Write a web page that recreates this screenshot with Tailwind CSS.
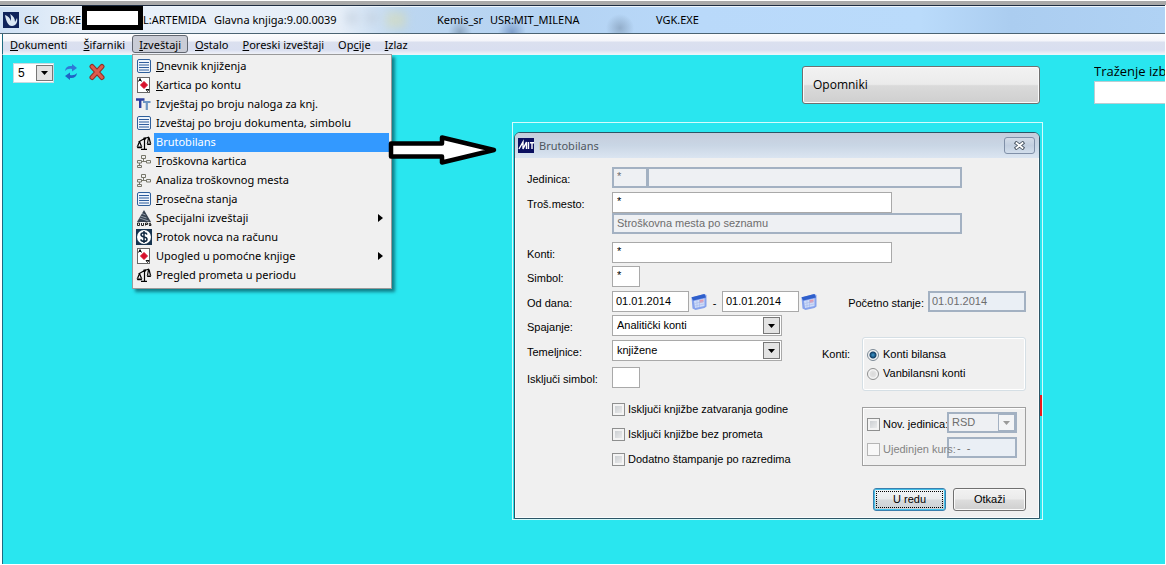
<!DOCTYPE html>
<html lang="sr-Latn">
<head>
<meta charset="utf-8">
<meta name="viewport" content="width=device-width, initial-scale=1">
<title>Glavna knjiga</title>
<script src="https://cdn.jsdelivr.net/npm/@tailwindcss/browser@4"></script>
</head>
<body class="relative flex min-h-screen flex-col overflow-hidden bg-white pr-px pb-px pl-0.5 font-['Noto_Sans','Open_Sans',sans-serif] text-[11px] leading-4 text-black">

<svg class="hidden" aria-hidden="true">
  <symbol id="i-list" viewBox="0 0 16 16">
    <rect x="1.5" y="1.5" width="13" height="13" rx="1.5" fill="#eef4fb" stroke="#2f5f9a"/>
    <path d="M3 4.500h10M3 7h10M3 9.500h10M3 12h10" stroke="#2d5c9c" stroke-width="1.200"/>
  </symbol>
  <symbol id="i-card" viewBox="0 0 16 16">
    <rect x="1.500" y=".5" width="12" height="15" fill="#fff" stroke="#666"/>
    <path d="M8 4.500l3.500 3.500L8 11.500 4.500 8z" fill="#d8112c" stroke="#d8112c"/>
    <path d="M2.500 4.500L4 1.500l1.500 3M3 3.500h2M10 12.500h3l-1.500 2z" fill="none" stroke="#111"/>
  </symbol>
  <symbol id="i-tt" viewBox="0 0 16 16">
    <path d="M0 3.500h8.500M4.200 3v9" fill="none" stroke="#2b3f9e" stroke-width="2.400"/>
    <path d="M7 6h7.500M10.800 6v8" fill="none" stroke="#6d95c4" stroke-width="2.200"/>
  </symbol>
  <symbol id="i-scale" viewBox="0 0 16 16">
    <path d="M8.500 3v11M5 14.300h6M2.500 7L8.500 3.500 13 2M3.500 6.500L1.500 11.500M3.500 6.500l2 5M12.500 2.500l-1 6M13 2.500l1.500 6" fill="none" stroke="#000" stroke-width="1.200"/>
    <path d="M.5 11.500h6l-1 1.700h-4zM10.500 8.500h5l-1 1.500h-3zM7.500 2.500h2.500v2H7.500z" fill="#000"/>
  </symbol>
  <symbol id="i-tree" viewBox="0 0 16 16">
    <path d="M5.500 2.500h4v3h-4zM1.500 7.500h4v2.500h-4zM10.500 7.500h4v2.500h-4zM1.500 12.500h4v2h-4zM7.500 5.500v3M5.500 8.500h5M3.500 10v2.500" fill="none" stroke="#77776a"/>
  </symbol>
  <symbol id="i-durs" viewBox="0 0 16 16">
    <path d="M8 0l7 12H1z" fill="#35404e"/>
    <path d="M4.500 6l6 2M3.500 8l9 3M6 3.500l3.500 1.500" stroke="#a9b4c2" stroke-width=".8"/>
    <path d="M1.500 13v2.500h2v-2.500zM5.500 13v2.500h2V13M9.500 15.500V13h2v1.500h-2M15 13.300h-1.800v1H15v1.200h-2" fill="none" stroke="#222"/>
  </symbol>
  <symbol id="i-dollar" viewBox="0 0 16 16">
    <path d="M0 0h16v16H0z" fill="#173450"/><circle cx="8" cy="8" r="7" fill="#fff"/>
    <path d="M11 5.500C10.500 4 9.500 3.800 8 3.800c-2 0-3 .8-3 2S6.500 7.700 8 8s3 .8 3 2.200-1.200 2.100-3 2.100-3-.8-3.200-2M8 2v12" fill="none" stroke="#0f2740" stroke-width="1.500"/>
  </symbol>
  <symbol id="i-cal" viewBox="0 0 16 16">
    <path d="M.5 3.500L13 0l2.500 1v11.500l-2 1.500-9 2-3-1.500z" fill="#86a2ec"/>
    <path d="M.5 3.200L13.500 0l1.500 3.500L2 6.500z" fill="#2f5fcb"/>
    <path d="M3 7l10.500-2.500v7.500L4 14z" fill="#cfdcf8"/>
    <path d="M8.500 6.200l4-.9v3l-4 .8z" fill="#e59aac"/>
    <path d="M3.500 9.500l9-2M4 12l9-2M6 6.500v7M8.500 6v7" stroke="#a3b9ec" stroke-width=".6"/>
  </symbol>
</svg>

<!-- Window caption -->
<div class="-mx-0.5 mt-px h-1 bg-[#a9a9a9]"></div>
<header class="-ml-0.5 flex h-[29px] items-center border-y border-t-[#1c2b40] border-b-[#4b6373] bg-[radial-gradient(circle_at_460px_26px,#8fa9c4_0,transparent_12px),radial-gradient(circle_at_512px_26px,#7f9fcb_0,transparent_14px),radial-gradient(circle_at_620px_22px,#93aecb_0,transparent_14px),linear-gradient(90deg,#cfe1f5_0,#e9f1fa_80px,#e6eef8_340px,#bcd6f0_400px,#b4d3f3_560px,#b9d9fa_700px,#badbfb_920px,#abcdf0_1010px,#b0d2f4_100%)] pl-[3px] text-[11px] whitespace-nowrap shadow-[inset_0_1px_#eef6fd]">
  <svg class="h-4 w-4 shrink-0" viewBox="0 0 16 16"><path d="M0 0h16v16H0z" fill="#10245c"/><path d="M2 3c3 1 5 3 6 6 0-3 0-5-1-7 3 2 5 4 5 8l2-4c1 4-1 8-5 8C5 14 3 9 2 3z" fill="#dbe8f5"/></svg>
  <span class="ml-[5px] w-[26px]">GK</span>
  <span class="w-8">DB:KE</span>
  <span class="-mt-1 h-6 w-[61px] shrink-0 border-[5px] border-black bg-white"></span>
  <span class="w-[71px]">L:ARTEMIDA</span>
  <span class="w-[128px]">Glavna knjiga:9.00.0039</span>
  <span class="flex w-[95px] gap-2 pl-1 opacity-60 blur-xs"><i class="h-3 w-3 bg-[#c3cfdd]"></i><i class="h-3 w-3 bg-[#c3cfdd]"></i><i class="h-4 w-5 bg-[#d7dcb8]"></i></span>
  <span class="w-[53px]">Kemis_sr</span>
  <span class="w-[166px]">USR:MIT_MILENA</span>
  <span>VGK.EXE</span>
</header>

<!-- Menu bar -->
<nav class="flex h-[21px] items-center border-b border-l border-b-[#e9f6fb] border-l-[#1d6a80] bg-[linear-gradient(#fdfdfe_0,#f4f5fa_35%,#dbe0ef_40%,#d9dff0_80%,#f0f2f8_100%)] whitespace-nowrap">
  <button class="mr-0.5 h-[18px] px-[7px] pt-px"><u>D</u>okumenti</button>
  <button class="h-[18px] px-[7px] pt-px"><u>Š</u>ifarniki</button>
  <button class="flex h-[18px] items-center rounded-[3px] border border-[#60656f] bg-[#c9ccd6] px-1.5 pt-px" aria-expanded="true"><u>I</u>zveštaji</button>
  <button class="h-[18px] px-[7px] pt-px"><u>O</u>stalo</button>
  <button class="h-[18px] px-[7px] pt-px"><u>P</u>oreski izveštaji</button>
  <button class="h-[18px] px-[7px] pt-px">Op<u>c</u>ije</button>
  <button class="h-[18px] px-[7px] pt-px"><u>I</u>zlaz</button>
</nav>

<!-- Work area -->
<main class="flex-1 border-l border-[#1d6a80] bg-[#29e6ef]">
  <div class="flex items-start pt-2 pl-2.5 font-['Liberation_Sans',Arial,sans-serif] text-[12px]">
    <div class="relative h-5 w-[41px]">
      <select aria-label="Broj" class="h-full w-full appearance-none border border-[#c9dbe0] bg-white pl-1"><option>5</option></select>
      <span class="pointer-events-none absolute top-[2px] right-[1px] flex h-4 w-[17px] items-center justify-center border border-[#777] bg-[#e3e3e3]"><svg class="h-1 w-[7px]" viewBox="0 0 7 4"><path d="M0 0h7L3.500 4z"/></svg></span>
    </div>
    <button class="ml-2.5" aria-label="Osveži"><svg class="h-[18px] w-[14px]" viewBox="0 0 14 18"><path d="M1 8c.5-4 3-5.500 7-5V1l5 4-5 3.500V6C5 5.500 3 6 1 8z" fill="#2f78d6"/><path d="M13 10c-.5 4-3 5.500-7 5v2l-5-4 5-3.500V12c3 .5 5 0 7-2z" fill="#1f62c4"/></svg></button>
    <button class="ml-[11px]" aria-label="Zatvori"><svg class="h-[18px] w-4" viewBox="0 0 16 18"><path d="M3 3.500l10 11M13 3.500l-10 11" stroke="#8d3226" stroke-width="5" stroke-linecap="round"/><path d="M3 3.500l10 11M13 3.500l-10 11" stroke="#dd5a4c" stroke-width="3" stroke-linecap="round"/></svg></button>
    <button class="mt-[3px] ml-auto h-[38px] w-[238px] rounded-[3px] border border-[#707070] bg-[linear-gradient(#f2f2f2_0,#ebebeb_48%,#dadada_52%,#cfcfcf_100%)] pl-2.5 text-left font-['Open_Sans','Noto_Sans',sans-serif] shadow-[inset_0_0_0_1px_#fafafa]">Opomniki</button>
    <div class="ml-[54px] w-[71px] overflow-hidden font-['Open_Sans','Noto_Sans',sans-serif] text-[13px] whitespace-nowrap">
      <label for="search" class="block h-[18px]">Traženje izb</label>
      <input id="search" class="h-[23px] w-40 border border-[#b9cdd2] bg-white px-1">
    </div>
  </div>
</main>

<!-- Open menu -->
<ul class="absolute top-[54px] left-[132px] w-[260px] border border-[#9a9a9a] bg-[#f0f0f0] p-0.5 pb-[3px] whitespace-nowrap shadow-[3px_3px_3px_rgba(0,60,70,.6)]">
  <li class="flex h-[19px] items-center gap-1 pb-0.5 pl-px"><svg class="h-4 w-4"><use href="#i-list"/></svg><span><u>D</u>nevnik knjiženja</span></li>
  <li class="flex h-[19px] items-center gap-1 pb-0.5 pl-px"><svg class="h-4 w-4"><use href="#i-card"/></svg><span><u>K</u>artica po kontu</span></li>
  <li class="flex h-[19px] items-center gap-1 pb-0.5 pl-px"><svg class="h-4 w-4"><use href="#i-tt"/></svg><span>Izvještaj po broju naloga za knj.</span></li>
  <li class="flex h-[19px] items-center gap-1 pb-0.5 pl-px"><svg class="h-4 w-4"><use href="#i-list"/></svg><span>Izveštaj po broju dokumenta, simbolu</span></li>
  <li class="flex h-[19px] items-center gap-0.5 pl-px"><svg class="h-4 w-4 shrink-0"><use href="#i-scale"/></svg><span class="flex h-full flex-1 items-center bg-[#3399ff] pb-0.5 pl-0.5 text-white">Brutobilans</span></li>
  <li class="flex h-[19px] items-center gap-1 pb-0.5 pl-px"><svg class="h-4 w-4"><use href="#i-tree"/></svg><span><u>T</u>roškovna kartica</span></li>
  <li class="flex h-[19px] items-center gap-1 pb-0.5 pl-px"><svg class="h-4 w-4"><use href="#i-tree"/></svg><span>Analiza troškovnog mesta</span></li>
  <li class="flex h-[19px] items-center gap-1 pb-0.5 pl-px"><svg class="h-4 w-4"><use href="#i-list"/></svg><span><u>P</u>rosečna stanja</span></li>
  <li class="flex h-[19px] items-center gap-1 pb-0.5 pl-px"><svg class="h-4 w-4"><use href="#i-durs"/></svg><span>Specijalni izveštaji</span><svg class="mr-1.5 ml-auto h-2 w-[5px]" viewBox="0 0 5 8"><path d="M0 0l5 4-5 4z"/></svg></li>
  <li class="flex h-[19px] items-center gap-1 pb-0.5 pl-px"><svg class="h-4 w-4"><use href="#i-dollar"/></svg><span>Protok novca na računu</span></li>
  <li class="flex h-[19px] items-center gap-1 pb-0.5 pl-px"><svg class="h-4 w-4"><use href="#i-card"/></svg><span>Upogled u pomoćne knjige</span><svg class="mr-1.5 ml-auto h-2 w-[5px]" viewBox="0 0 5 8"><path d="M0 0l5 4-5 4z"/></svg></li>
  <li class="flex h-[19px] items-center gap-1 pb-0.5 pl-px"><svg class="h-4 w-4"><use href="#i-scale"/></svg><span>Pregled prometa u periodu</span></li>
</ul>

<!-- Annotation arrow -->
<svg class="absolute top-[134px] left-[388px] h-8 w-[110px]" viewBox="0 0 110 32"><path d="M3 9.500h51V3.500L106 16 54 28.500v-6H3z" fill="#fff" stroke="#000" stroke-width="4.500" stroke-linejoin="round"/></svg>

<!-- Dialog window -->
<div class="absolute top-[395px] left-[1038px] h-[21px] w-1 bg-[#e8191c]"></div>
<section role="dialog" aria-label="Brutobilans" class="absolute top-[122px] left-[512px] w-[531px] border border-[#d5fbfc] pt-[9px] pr-0.5 pl-px font-['Liberation_Sans',Arial,sans-serif] text-[11px] leading-[13px]">
  <div class="rounded-t-[6px] border border-[#2c5566] bg-[#f0f0f0] shadow-[inset_0_0_0_1px_#fafcfd]">
    <div class="flex h-[25px] items-center rounded-t-[5px] bg-[linear-gradient(#c5cddc,#c9d6e5_50%,#dbe5f1)] pr-1 pl-[3px] font-['Noto_Sans','Open_Sans',sans-serif] text-[#4f565e]">
      <svg class="h-[15px] w-4" viewBox="0 0 16 15"><path d="M0 0h16v15H0z" fill="#0b1060"/><path d="M1 11l4-7v7l3.500-7v7M10.500 4v7M12 4.700h4M14 5v6" fill="none" stroke="#fff" stroke-width="1.400"/></svg>
      <span class="ml-[5px]">Brutobilans</span>
      <button aria-label="Zatvori" class="ml-auto flex h-[17px] w-[31px] items-center justify-center rounded-[3px] border border-[#8090a8] bg-[linear-gradient(#d3dce8,#c2cfe0_50%,#d2deec)]"><svg class="h-[9px] w-[11px]" viewBox="0 0 11 9"><path d="M1 1l9 7M10 1L1 8" stroke="#4c5866" stroke-width="3.600"/><path d="M1.800 1.500l7.400 6M9.200 1.500l-7.400 6" stroke="#fff" stroke-width="1.800"/></svg></button>
    </div>

    <form class="pt-[9px] pr-[13px] pb-[7px] pl-3 whitespace-nowrap">
      <div class="flex items-center">
        <label for="unit" class="w-[85px] pt-1">Jedinica:</label>
        <input id="unit" disabled value="*" class="h-[21px] w-[35px] border-2 border-r border-[#a3b1c2] bg-[#eef0f3] px-[3px] pb-1 text-[#6d6d6d]">
        <input aria-label="Naziv jedinice" disabled class="h-[21px] w-[315px] border-2 border-[#a3b1c2] bg-[#eef0f3] px-1">
      </div>
      <div class="mt-1 flex items-center">
        <label for="cost" class="w-[85px] pt-1">Troš.mesto:</label>
        <input id="cost" value="*" class="h-[21px] w-[280px] border border-[#a9a9a9] bg-white px-1 pb-1">
      </div>
      <input aria-label="Opis troškovnog mesta" disabled value="Stroškovna mesta po seznamu" class="ml-[85px] block h-[21px] w-[350px] border-2 border-[#a3b1c2] bg-[#eef0f3] px-[3px] pb-0.5 text-[#6d6d6d]">
      <div class="mt-2 flex items-center">
        <label for="acc" class="w-[85px] pt-1">Konti:</label>
        <input id="acc" value="*" class="h-[21px] w-[280px] border border-[#a9a9a9] bg-white px-1 pb-1">
      </div>
      <div class="mt-[3px] flex items-center">
        <label for="sym" class="w-[85px] pt-1">Simbol:</label>
        <input id="sym" value="*" class="h-[21px] w-7 border border-[#a9a9a9] bg-white px-1 pb-1">
      </div>
      <div class="mt-1 flex items-center">
        <label for="from" class="w-[85px] pt-1">Od dana:</label>
        <input id="from" value="01.01.2014" class="h-[21px] w-[77px] border border-[#a9a9a9] bg-white px-[3px] pb-0.5">
        <button type="button" aria-label="Izaberi datum od" class="ml-0.5"><svg class="h-4 w-4"><use href="#i-cal"/></svg></button>
        <span class="w-[15px] pt-1 text-center">-</span>
        <input aria-label="Do dana" value="01.01.2014" class="h-[21px] w-[77px] border border-[#a9a9a9] bg-white px-[3px] pb-0.5">
        <button type="button" aria-label="Izaberi datum do" class="ml-0.5"><svg class="h-4 w-4"><use href="#i-cal"/></svg></button>
        <label for="open" class="mr-1 ml-auto pt-1">Početno stanje:</label>
        <input id="open" disabled value="01.01.2014" class="h-[21px] w-[98px] border-2 border-[#a3b1c2] bg-[#eaeff5] px-0.5 pb-0.5 text-[#6d6d6d]">
      </div>

      <div class="mt-[3px] flex justify-between">
        <div>
          <div class="flex items-center">
            <label for="join" class="w-[85px] pt-1">Spajanje:</label>
            <div class="relative h-[21px] w-[170px]">
              <select id="join" class="h-full w-full appearance-none border border-[#a9a9a9] bg-white pl-1"><option>Analitički konti</option></select>
              <span class="pointer-events-none absolute top-[2px] right-[2px] flex h-[17px] w-[17px] items-center justify-center border border-[#777] bg-[#e3e3e3]"><svg class="h-1 w-[7px]" viewBox="0 0 7 4"><path d="M0 0h7L3.500 4z"/></svg></span>
            </div>
          </div>
          <div class="mt-1 flex items-center">
            <label for="vouch" class="w-[85px] pt-1">Temeljnice:</label>
            <div class="relative h-[21px] w-[170px]">
              <select id="vouch" class="h-full w-full appearance-none border border-[#a9a9a9] bg-white pl-1"><option>knjižene</option></select>
              <span class="pointer-events-none absolute top-[2px] right-[2px] flex h-[17px] w-[17px] items-center justify-center border border-[#777] bg-[#e3e3e3]"><svg class="h-1 w-[7px]" viewBox="0 0 7 4"><path d="M0 0h7L3.500 4z"/></svg></span>
            </div>
          </div>
          <div class="mt-1.5 flex items-center">
            <label for="excl" class="w-[85px] pt-1">Isključi simbol:</label>
            <input id="excl" class="h-[21px] w-7 border border-[#a9a9a9] bg-white px-1">
          </div>
          <div class="mt-[15px] ml-[85px] flex flex-col gap-3">
            <label class="flex h-[13px] items-center gap-[3px]"><input type="checkbox" class="h-[13px] w-[13px] appearance-none border border-[#8e8f8f] bg-[linear-gradient(135deg,#c4c8cc,#f2f2f2)] shadow-[inset_0_0_0_2px_#f4f4f4]">Isključi knjižbe zatvaranja godine</label>
            <label class="flex h-[13px] items-center gap-[3px]"><input type="checkbox" class="h-[13px] w-[13px] appearance-none border border-[#8e8f8f] bg-[linear-gradient(135deg,#c4c8cc,#f2f2f2)] shadow-[inset_0_0_0_2px_#f4f4f4]">Isključi knjižbe bez prometa</label>
            <label class="flex h-[13px] items-center gap-[3px]"><input type="checkbox" class="h-[13px] w-[13px] appearance-none border border-[#8e8f8f] bg-[linear-gradient(135deg,#c4c8cc,#f2f2f2)] shadow-[inset_0_0_0_2px_#f4f4f4]">Dodatno štampanje po razredima</label>
          </div>
        </div>

        <div class="pt-[22px]">
          <div class="flex">
            <span class="w-10 pt-[11px]">Konti:</span>
            <div role="radiogroup" aria-label="Konti" class="flex h-[54px] w-[164px] flex-col gap-1.5 rounded-[3px] border border-[#d5dfe5] pt-2.5 pl-1 shadow-[inset_0_0_0_1px_#fff]">
              <label class="flex h-[13px] items-center gap-1"><input type="radio" name="k" checked class="h-3 w-3 appearance-none rounded-full border border-[#7d8a96] bg-[radial-gradient(circle,#3f9bd0_0,#123f66_3px,#f4f4f4_4px)]">Konti bilansa</label>
              <label class="flex h-[13px] items-center gap-1"><input type="radio" name="k" class="h-3 w-3 appearance-none rounded-full border border-[#8e8f8f] bg-[radial-gradient(circle,#d9d9d9_0,#e2e2e2_3px,#f4f4f4_4px)]">Vanbilansni konti</label>
            </div>
          </div>
          <div class="mt-4 ml-10 flex h-[59px] w-[164px] flex-col gap-1 border border-[#a0a0a0] pt-1 pr-2 pl-1 shadow-[inset_1px_1px_#fff]">
            <div class="flex items-center">
              <input id="newunit" type="checkbox" class="mt-1 h-[13px] w-[13px] shrink-0 appearance-none border border-[#8e8f8f] bg-[linear-gradient(135deg,#c4c8cc,#f2f2f2)] shadow-[inset_0_0_0_2px_#f4f4f4]">
              <label for="newunit" class="w-[67px] pt-1 pl-[3px]">Nov. jedinica:</label>
              <div class="relative h-[21px] w-[70px] shrink-0">
                <select aria-label="Valuta" disabled class="h-full w-full appearance-none border-2 border-[#a3b1c2] bg-[#eef0f3] pl-[3px] text-[#6d6d6d] opacity-100"><option>RSD</option></select>
                <span class="pointer-events-none absolute top-[2px] right-[2px] flex h-[17px] w-[17px] items-center justify-center border border-[#a3b1c2] bg-[#f3f4f6]"><svg class="h-1 w-[7px] text-[#9a9a9a]" viewBox="0 0 7 4"><path d="M0 0h7L3.500 4z" fill="currentColor"/></svg></span>
              </div>
            </div>
            <div class="flex items-center">
              <input id="rate" type="checkbox" disabled class="mt-1 h-[13px] w-[13px] shrink-0 appearance-none border border-[#b5b5b5] bg-[#f8f8f8]">
              <label for="rate" class="z-10 w-[67px] shrink-0 pt-1 pl-[3px] text-[#838383]">Ujedinjen kurs:</label>
              <input aria-label="Datum kursa" disabled value="-  -" class="h-[21px] w-[70px] shrink-0 border-2 border-[#a3b1c2] bg-[#eaeff5] pl-2 text-[#6d6d6d]">
            </div>
          </div>
        </div>
      </div>

      <div class="mt-[22px] flex justify-end gap-[7px]">
        <button type="button" class="h-[23px] w-[73px] rounded-[3px] border border-[#3a7fae] bg-[linear-gradient(#f1f4f6_0,#e9ecee_48%,#d6dadd_52%,#cbd0d4_100%)] p-0.5 shadow-[inset_0_0_0_1px_#45c0e8]"><span class="flex h-full items-center justify-center border border-dotted border-black">U redu</span></button>
        <button type="button" class="h-[23px] w-[73px] rounded-[3px] border border-[#707070] bg-[linear-gradient(#f2f2f2_0,#ebebeb_48%,#dddddd_52%,#cfcfcf_100%)] shadow-[inset_0_0_0_1px_#fafafa]">Otkaži</button>
      </div>
    </form>
  </div>
</section>
</body>
</html>
